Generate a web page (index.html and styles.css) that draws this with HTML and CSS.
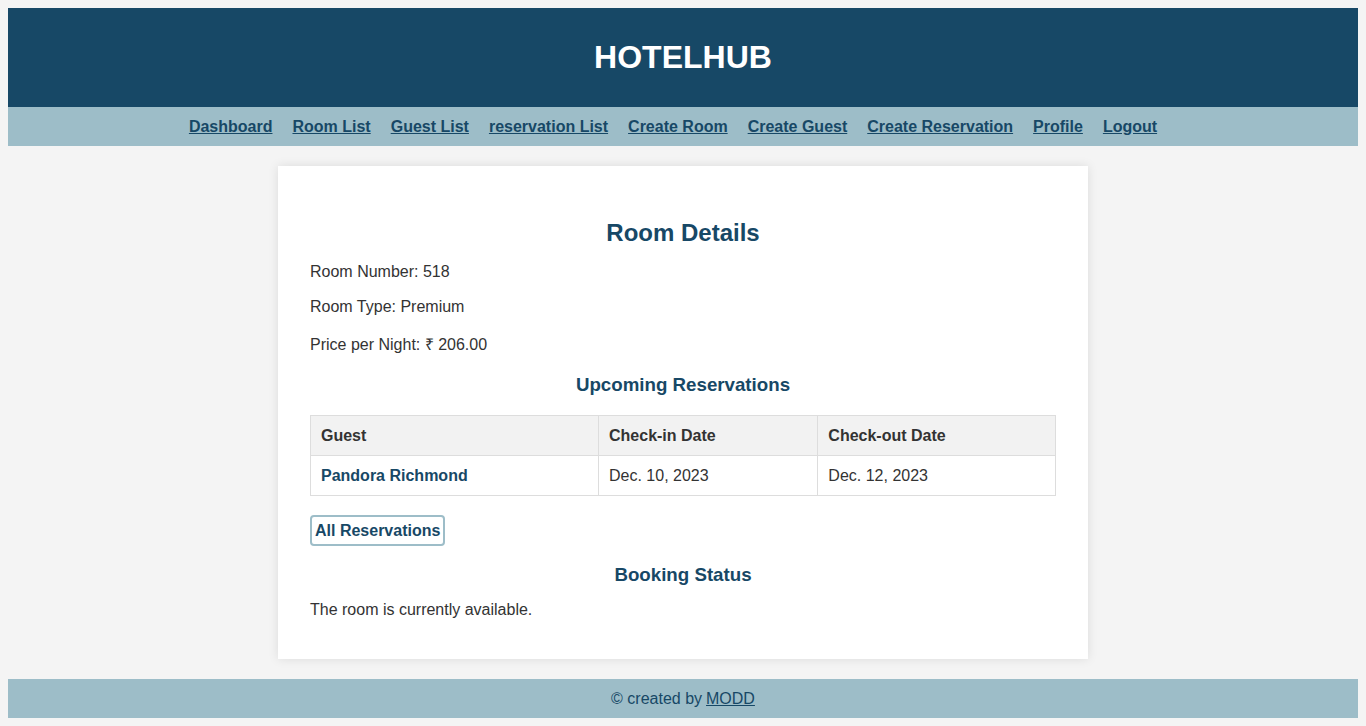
FILE: index.html
```html
<!DOCTYPE html>
<html lang="en">
<head>
<meta charset="utf-8">
<title>HotelHub - Room Details</title>
<link rel="stylesheet" href="styles.css">
</head>
<body>
<header class="site-header">
  <h1 class="brand">HOTELHUB</h1>
</header>
<nav class="site-nav">
  <a href="#">Dashboard</a>
  <a href="#">Room List</a>
  <a href="#">Guest List</a>
  <a href="#">reservation List</a>
  <a href="#">Create Room</a>
  <a href="#">Create Guest</a>
  <a href="#">Create Reservation</a>
  <a href="#">Profile</a>
  <a href="#">Logout</a>
</nav>
<main class="card">
  <h2 class="title">Room Details</h2>
  <p class="field">Room Number: 518</p>
  <p class="field">Room Type: Premium</p>
  <p class="field">Price per Night: ₹ 206.00</p>
  <h3 class="section">Upcoming Reservations</h3>
  <table class="res-table">
    <thead>
      <tr><th>Guest</th><th>Check-in Date</th><th>Check-out Date</th></tr>
    </thead>
    <tbody>
      <tr><td><a class="guest" href="#">Pandora Richmond</a></td><td>Dec. 10, 2023</td><td>Dec. 12, 2023</td></tr>
    </tbody>
  </table>
  <p class="actions"><a class="btn" href="#">All Reservations</a></p>
  <h3 class="section status">Booking Status</h3>
  <p class="note">The room is currently available.</p>
</main>
<footer class="site-footer">
  © created by <a href="#">MODD</a>
</footer>
</body>
</html>
```
FILE: styles.css
```css
body {
  margin: 8px;
  background: #f4f4f4;
  font-family: "Liberation Sans", Arial, sans-serif;
  font-size: 16px;
  color: #333;
}
.site-header {
  background: #174866;
  height: 99px;
  display: flex;
  align-items: center;
  justify-content: center;
}
.brand {
  margin: 0;
  color: #fff;
  font-size: 32px;
  font-weight: bold;
}
.site-nav {
  background: #9dbdc8;
  height: 39px;
  display: flex;
  justify-content: center;
  align-items: center;
  gap: 20px;
  padding-right: 20px;
}
.site-nav a {
  color: #174866;
  font-weight: bold;
}
.card {
  display: block;
  width: 746px;
  margin: 20px auto;
  background: #fff;
  padding: 53px 32px 24px;
  box-shadow: 0 0 10px rgba(0, 0, 0, 0.1);
}
.title {
  margin: 0 0 16px;
  text-align: center;
  color: #174866;
  font-size: 24px;
}
.field {
  margin: 17px 0;
}
.card .field:first-of-type {
  margin-top: 16px;
}
.section {
  text-align: center;
  color: #174866;
  font-size: 18.72px;
  margin: 19px 0;
}
.status {
  margin-top: 18px;
  margin-bottom: 0;
}
.note {
  margin: 15px 0 16px;
}
.res-table {
  width: 100%;
  border-collapse: collapse;
  margin-bottom: 19px;
}
.res-table th,
.res-table td {
  border: 1px solid #ddd;
  padding: 11px 10px 10px;
  text-align: left;
}
.res-table th {
  background: #f2f2f2;
  font-weight: bold;
}
.guest {
  color: #174866;
  font-weight: bold;
  text-decoration: none;
}
.actions {
  margin: 16px 0;
}
.btn {
  display: inline-block;
  color: #174866;
  font-weight: bold;
  text-decoration: none;
  border: 2px solid #9dbdc8;
  border-radius: 4px;
  padding: 5px 3px 4px;
}
.site-footer {
  background: #9dbdc8;
  height: 39px;
  display: flex;
  align-items: center;
  justify-content: center;
  color: #174866;
}
.site-footer a {
  color: #174866;
  margin-left: 4px;
}
```
